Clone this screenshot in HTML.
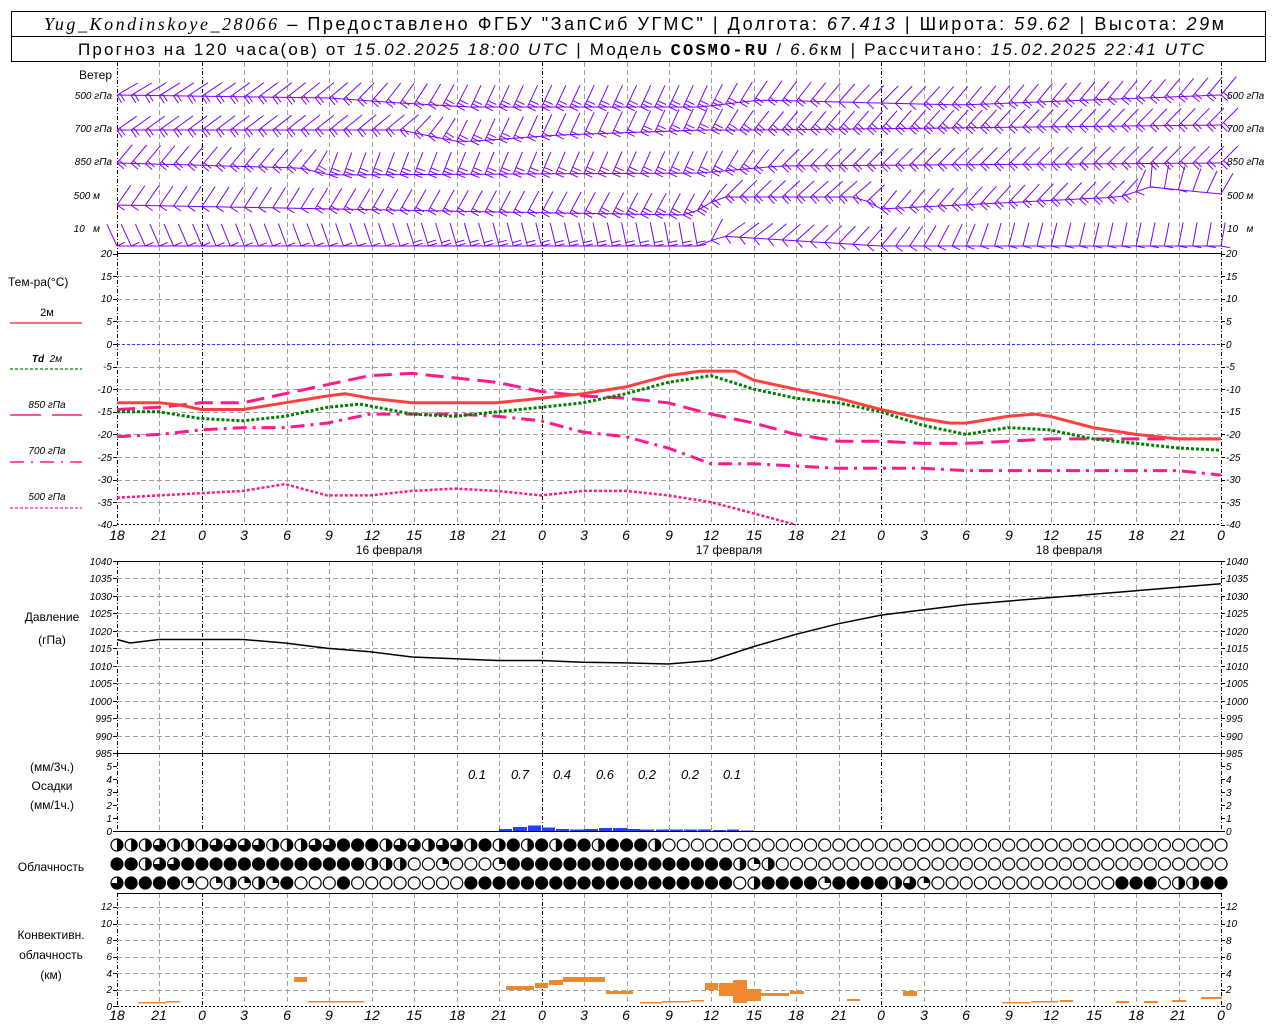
<!DOCTYPE html>
<html><head><meta charset="utf-8"><style>
html,body{margin:0;padding:0;background:#fff;width:1280px;height:1024px;overflow:hidden}
svg{display:block;font-family:"Liberation Sans",sans-serif}
.l{font-size:12px;fill:#000}
.t{font-size:10px;font-style:italic;fill:#000}
.h{font-size:14px;font-style:italic;fill:#000;text-anchor:middle}
.r{text-anchor:end}
.c{text-anchor:middle}
</style></head><body>
<svg id="s" width="1280" height="1024" viewBox="0 0 1280 1024" xmlns="http://www.w3.org/2000/svg">
<rect x="11.5" y="11.5" width="1254" height="50" fill="none" stroke="#000"/>
<line x1="11" y1="36.5" x2="1266" y2="36.5" stroke="#000"/>
<text x="44" y="30" font-size="18" textLength="1180" lengthAdjust="spacing"><tspan font-style="italic" font-family="Liberation Serif">Yug_Kondinskoye_28066</tspan> – Предоставлено ФГБУ "ЗапСиб УГМС" | Долгота: <tspan font-style="italic">67.413</tspan> | Широта: <tspan font-style="italic">59.62</tspan> | Высота: <tspan font-style="italic">29</tspan>м</text>
<text x="78" y="55" font-size="17" textLength="1126" lengthAdjust="spacing">Прогноз на 120 часа(ов) от <tspan font-style="italic">15.02.2025 18:00 UTC</tspan> | Модель <tspan font-weight="bold" font-family="Liberation Mono">COSMO-RU</tspan> / <tspan font-style="italic">6.6</tspan>км | Рассчитано: <tspan font-style="italic">15.02.2025 22:41 UTC</tspan></text>
<g id="grid"></g>
<g id="data"></g>
<text class="l r" x="112" y="79">Ветер</text>
<text class="t r" x="112" y="99" font-size="11">500 гПа</text>
<text class="t r" x="112" y="132" font-size="11">700 гПа</text>
<text class="t r" x="112" y="165" font-size="11">850 гПа</text>
<text class="t r" x="100" y="199" font-size="11">500 м</text>
<text class="t r" x="100" y="232" font-size="11">10&#160;&#160;&#160;м</text>
<text class="t" x="1227" y="99" font-size="11">500 гПа</text>
<text class="t" x="1227" y="132" font-size="11">700 гПа</text>
<text class="t" x="1227" y="165" font-size="11">850 гПа</text>
<text class="t" x="1227" y="199" font-size="11">500 м</text>
<text class="t" x="1227" y="232" font-size="11">10&#160;&#160;&#160;м</text>
<text class="l" x="8" y="286">Тем-ра(°C)</text>
<text class="c" x="47" y="316" font-size="11">2м</text>
<line x1="10" y1="323" x2="82" y2="323" stroke="#ff4040" stroke-width="1.5"/>
<text class="t c" x="47" y="362" font-size="11"><tspan font-weight="bold">Td</tspan>&#160;&#160;2м</text>
<line x1="10" y1="369" x2="82" y2="369" stroke="#008000" stroke-width="1.2" stroke-dasharray="3,2"/>
<text class="t c" x="47" y="408" font-size="11">850 гПа</text>
<line x1="10" y1="415" x2="41" y2="415" stroke="#ff1a8c" stroke-width="1.5"/><line x1="52" y1="415" x2="82" y2="415" stroke="#ff1a8c" stroke-width="1.5"/>
<text class="t c" x="47" y="454" font-size="11">700 гПа</text>
<line x1="10" y1="462" x2="82" y2="462" stroke="#ff1a8c" stroke-width="1.5" stroke-dasharray="14,7,2,7"/>
<text class="t c" x="47" y="500" font-size="11">500 гПа</text>
<line x1="10" y1="508" x2="82" y2="508" stroke="#ff1a8c" stroke-width="1.2" stroke-dasharray="3,2"/>
<text class="l c" x="52" y="621">Давление</text>
<text class="l c" x="52" y="644">(гПа)</text>
<text class="l c" x="52" y="771">(мм/3ч.)</text>
<text class="l c" x="52" y="790">Осадки</text>
<text class="l c" x="52" y="809">(мм/1ч.)</text>
<text class="l c" x="51" y="871">Облачность</text>
<text class="l c" x="51" y="939">Конвективн.</text>
<text class="l c" x="51" y="959">облачность</text>
<text class="l c" x="51" y="979">(км)</text>
<text class="t r" x="112" y="257">20</text><text class="t r" x="112" y="280">15</text><text class="t r" x="112" y="302">10</text><text class="t r" x="112" y="325">5</text><text class="t r" x="112" y="348">0</text><text class="t r" x="112" y="370">-5</text><text class="t r" x="112" y="393">-10</text><text class="t r" x="112" y="415">-15</text><text class="t r" x="112" y="438">-20</text><text class="t r" x="112" y="461">-25</text><text class="t r" x="112" y="483">-30</text><text class="t r" x="112" y="506">-35</text><text class="t r" x="112" y="528">-40</text>
<text class="t" x="1226" y="257">20</text><text class="t" x="1226" y="280">15</text><text class="t" x="1226" y="302">10</text><text class="t" x="1226" y="325">5</text><text class="t" x="1226" y="348">0</text><text class="t" x="1226" y="370">-5</text><text class="t" x="1226" y="393">-10</text><text class="t" x="1226" y="415">-15</text><text class="t" x="1226" y="438">-20</text><text class="t" x="1226" y="461">-25</text><text class="t" x="1226" y="483">-30</text><text class="t" x="1226" y="506">-35</text><text class="t" x="1226" y="528">-40</text>
<text class="t r" x="112" y="565">1040</text><text class="t r" x="112" y="582">1035</text><text class="t r" x="112" y="600">1030</text><text class="t r" x="112" y="617">1025</text><text class="t r" x="112" y="635">1020</text><text class="t r" x="112" y="652">1015</text><text class="t r" x="112" y="670">1010</text><text class="t r" x="112" y="687">1005</text><text class="t r" x="112" y="705">1000</text><text class="t r" x="112" y="722">995</text><text class="t r" x="112" y="740">990</text><text class="t r" x="112" y="757">985</text>
<text class="t" x="1226" y="565">1040</text><text class="t" x="1226" y="582">1035</text><text class="t" x="1226" y="600">1030</text><text class="t" x="1226" y="617">1025</text><text class="t" x="1226" y="635">1020</text><text class="t" x="1226" y="652">1015</text><text class="t" x="1226" y="670">1010</text><text class="t" x="1226" y="687">1005</text><text class="t" x="1226" y="705">1000</text><text class="t" x="1226" y="722">995</text><text class="t" x="1226" y="740">990</text>
<text class="t r" x="112" y="770">5</text><text class="t r" x="112" y="783">4</text><text class="t r" x="112" y="796">3</text><text class="t r" x="112" y="809">2</text><text class="t r" x="112" y="822">1</text><text class="t r" x="112" y="835">0</text>
<text class="t" x="1226" y="757">985</text><text class="t" x="1226" y="770">5</text><text class="t" x="1226" y="783">4</text><text class="t" x="1226" y="796">3</text><text class="t" x="1226" y="809">2</text><text class="t" x="1226" y="822">1</text><text class="t" x="1226" y="835">0</text>
<g font-size="13" font-style="italic" text-anchor="middle">
<text x="477" y="779">0.1</text><text x="520" y="779">0.7</text><text x="562" y="779">0.4</text><text x="605" y="779">0.6</text><text x="647" y="779">0.2</text><text x="690" y="779">0.2</text><text x="732" y="779">0.1</text>
</g>
<text class="t r" x="112" y="910">12</text><text class="t r" x="112" y="927">10</text><text class="t r" x="112" y="944">8</text><text class="t r" x="112" y="960">6</text><text class="t r" x="112" y="977">4</text><text class="t r" x="112" y="993">2</text><text class="t r" x="112" y="1010">0</text>
<text class="t" x="1226" y="910">12</text><text class="t" x="1226" y="927">10</text><text class="t" x="1226" y="944">8</text><text class="t" x="1226" y="960">6</text><text class="t" x="1226" y="977">4</text><text class="t" x="1226" y="993">2</text><text class="t" x="1226" y="1010">0</text>
<g class="h">
<text class="h" x="117" y="540">18</text><text class="h" x="159" y="540">21</text><text class="h" x="202" y="540">0</text><text class="h" x="244" y="540">3</text><text class="h" x="287" y="540">6</text><text class="h" x="329" y="540">9</text><text class="h" x="372" y="540">12</text><text class="h" x="414" y="540">15</text><text class="h" x="457" y="540">18</text><text class="h" x="499" y="540">21</text><text class="h" x="542" y="540">0</text><text class="h" x="584" y="540">3</text><text class="h" x="626" y="540">6</text><text class="h" x="669" y="540">9</text><text class="h" x="711" y="540">12</text><text class="h" x="754" y="540">15</text><text class="h" x="796" y="540">18</text><text class="h" x="839" y="540">21</text><text class="h" x="881" y="540">0</text><text class="h" x="924" y="540">3</text><text class="h" x="966" y="540">6</text><text class="h" x="1009" y="540">9</text><text class="h" x="1051" y="540">12</text><text class="h" x="1094" y="540">15</text><text class="h" x="1136" y="540">18</text><text class="h" x="1178" y="540">21</text><text class="h" x="1221" y="540">0</text>
</g>
<text class="l c" x="389" y="554" font-size="13">16 февраля</text>
<text class="l c" x="729" y="554" font-size="13">17 февраля</text>
<text class="l c" x="1069" y="554" font-size="13">18 февраля</text>
<g class="h">
<text class="h" x="117" y="1020">18</text><text class="h" x="159" y="1020">21</text><text class="h" x="202" y="1020">0</text><text class="h" x="244" y="1020">3</text><text class="h" x="287" y="1020">6</text><text class="h" x="329" y="1020">9</text><text class="h" x="372" y="1020">12</text><text class="h" x="414" y="1020">15</text><text class="h" x="457" y="1020">18</text><text class="h" x="499" y="1020">21</text><text class="h" x="542" y="1020">0</text><text class="h" x="584" y="1020">3</text><text class="h" x="626" y="1020">6</text><text class="h" x="669" y="1020">9</text><text class="h" x="711" y="1020">12</text><text class="h" x="754" y="1020">15</text><text class="h" x="796" y="1020">18</text><text class="h" x="839" y="1020">21</text><text class="h" x="881" y="1020">0</text><text class="h" x="924" y="1020">3</text><text class="h" x="966" y="1020">6</text><text class="h" x="1009" y="1020">9</text><text class="h" x="1051" y="1020">12</text><text class="h" x="1094" y="1020">15</text><text class="h" x="1136" y="1020">18</text><text class="h" x="1178" y="1020">21</text><text class="h" x="1221" y="1020">0</text>
</g>
</svg>
<script>
(function(){
var NS="http://www.w3.org/2000/svg";
var G=document.getElementById("grid"),D=document.getElementById("data");
function el(p,n,a){var e=document.createElementNS(NS,n);for(var k in a)e.setAttribute(k,a[k]);p.appendChild(e);return e;}
function X(k){return 117+42.46*k;}
var panels=[[62,253],[253,524],[561,753],[753,831],[893,1006]];
panels.forEach(function(p){
 for(var k=0;k<=26;k++){
  var x=Math.round(X(k))+0.5;
  if(k%8==2||k==0||k==26){el(G,"line",{x1:x,y1:p[0],x2:x,y2:p[1],stroke:"#000","stroke-width":1,"stroke-dasharray":"4,2,1,2"});}
  else el(G,"line",{x1:x,y1:p[0],x2:x,y2:p[1],stroke:"#a0a0a0","stroke-width":1,"stroke-dasharray":"5,3"});
 }
});
function hl(y,st){el(G,"line",{x1:117,y1:y,x2:1221,y2:y,stroke:st?"#000":"#a0a0a0","stroke-width":1,"stroke-dasharray":st||"5,3"});}
for(var t=15;t>=-35;t-=5){ if(t!=0) hl(Math.round(344-4.52*t)+0.5);}
el(G,"line",{x1:117,y1:344.5,x2:1221,y2:344.5,stroke:"#2040ff","stroke-width":1,"stroke-dasharray":"3,2"});
for(var p=1035;p>=990;p-=5) hl(Math.round(561+(1040-p)*3.49)+0.5);
for(var c=2;c<=12;c+=2) hl(Math.round(1006-8.25*c)+0.5);
[253.5,561.5,753.5,831.5,893.5].forEach(function(y){el(G,"line",{x1:117,y1:y,x2:1221,y2:y,stroke:"#000","stroke-width":1});});
el(G,"line",{x1:117,y1:524.5,x2:1221,y2:524.5,stroke:"#000","stroke-dasharray":"2,2"});
el(G,"line",{x1:117,y1:1006.5,x2:1221,y2:1006.5,stroke:"#000","stroke-dasharray":"2,2"});
[[561,753,17.45,0,11],[766,831,13,0,5],[907,1006,16.5,0,6]].forEach(function(a){
 for(var i=0;i<=a[4];i++){var y=Math.round(a[0]+i*a[2])+0.5;el(G,"line",{x1:113,y1:y,x2:117,y2:y,stroke:"#000"});el(G,"line",{x1:1221,y1:y,x2:1225,y2:y,stroke:"#000"});}
});
for(var t2=20;t2>=-40;t2-=5){var yy=Math.round(344-4.52*t2)+0.5;el(G,"line",{x1:113,y1:yy,x2:117,y2:yy,stroke:"#000"});el(G,"line",{x1:1221,y1:yy,x2:1225,y2:yy,stroke:"#000"});}
function curve(pts,fy,st){var s=pts.map(function(p){return p[0]+","+fy(p[1]).toFixed(1);}).join(" ");st.points=s;st.fill="none";el(D,"polyline",st);}
var T=function(t){return 344-4.52*t;};
curve([[117,-20.5],[159,-20],[201,-19],[243,-18.5],[285,-18.5],[327,-17.5],[370,-15.5],[412,-15.5],[455,-15.5],[497,-16],[541,-17],[583,-19.5],[626,-20.5],[668,-23],[711,-26.5],[754,-26.5],[796,-27],[838,-27.5],[881,-27.5],[923,-27.5],[966,-28],[1008,-28],[1050,-28],[1093,-28],[1136,-28],[1178,-28],[1221,-29]],T,{stroke:"#ff1a8c","stroke-width":3,"stroke-dasharray":"14,6,3,6"});
curve([[117,-34],[159,-33.5],[201,-33],[243,-32.5],[285,-31],[327,-33.5],[370,-33.5],[412,-32.5],[455,-32],[497,-32.5],[541,-33.5],[583,-32.5],[626,-32.5],[668,-33.5],[711,-35],[754,-37.5],[796,-40]],T,{stroke:"#ff1a8c","stroke-width":2.5,"stroke-dasharray":"3,2"});
curve([[117,-14.5],[159,-14],[201,-13],[243,-13],[285,-11],[327,-9],[370,-7],[412,-6.5],[455,-7.5],[497,-8.5],[541,-10.5],[583,-11.5],[626,-12],[668,-13],[711,-15.5],[754,-17.5],[796,-20],[838,-21.5],[881,-21.5],[923,-22],[966,-22],[1008,-21.5],[1050,-21],[1093,-21],[1136,-21],[1178,-21],[1221,-21]],T,{stroke:"#ff1a8c","stroke-width":3,"stroke-dasharray":"18,8"});
curve([[117,-15],[159,-15],[201,-16.5],[243,-17],[285,-16],[327,-14],[360,-13.3],[412,-15.5],[455,-16],[497,-15],[541,-14],[583,-13],[626,-11],[668,-8.5],[711,-7],[754,-10],[796,-12],[838,-13],[881,-15],[923,-18],[966,-20],[1008,-18.5],[1050,-19],[1093,-21],[1136,-22],[1178,-23],[1221,-23.5]],T,{stroke:"#008000","stroke-width":3,"stroke-dasharray":"3,2"});
curve([[117,-13],[159,-13],[180,-13.5],[201,-14.5],[243,-14.5],[285,-13],[327,-11.5],[345,-11],[370,-12],[412,-13],[455,-13],[497,-13],[541,-12],[583,-11],[626,-9.5],[668,-7],[700,-6],[735,-6],[754,-8],[796,-10],[838,-12],[881,-14.5],[923,-16.5],[950,-17.5],[966,-17.5],[1008,-16],[1035,-15.5],[1050,-16],[1093,-18.5],[1136,-20],[1178,-21],[1221,-21]],T,{stroke:"#ff4040","stroke-width":3});
curve([[117,1017.5],[130,1016.5],[159,1017.5],[201,1017.5],[243,1017.5],[285,1016.5],[327,1015],[370,1014],[412,1012.5],[455,1012],[497,1011.5],[541,1011.5],[583,1011],[626,1010.8],[668,1010.5],[690,1011],[711,1011.5],[754,1015.5],[796,1019],[838,1022],[881,1024.5],[923,1026],[966,1027.5],[1008,1028.5],[1050,1029.5],[1093,1030.5],[1136,1031.5],[1178,1032.5],[1221,1033.5]],function(p){return 561+(1040-p)*3.49;},{stroke:"#000","stroke-width":1.5});
[[485,498,831],[499,512,829],[513,527,827],[528,541,825.5],[542,555,827.5],[556,569,829],[570,584,829.5],[584,598,829],[599,612,828],[613,627,828],[627,640,829],[640,654,829.5],[656,669,829.5],[670,683,829.5],[684,697,829.5],[698,711,829.5],[713,726,830],[727,739,829.5],[741,754,830.5]].forEach(function(b){el(D,"rect",{x:b[0],y:b[2],width:b[1]-b[0],height:831-b[2],fill:"#2040ff"});});
[[138,166,1002,1003.5],[166,180,1001,1002.5],[294,307,977,982],[308,364,1001,1002.5],[506,534,986,990],[535,548,983,988],[549,563,980,985],[563,605,977,982],[606,620,991,994],[620,633,991,994],[640,662,1002,1003.5],[662,690,1001,1002.5],[691,704,1000,1001.5],[705,718,983,990],[719,733,983,996],[733,747,980,1003],[747,761,989,1001],[761,775,993,996],[775,789,993,996],[790,804,991,994],[847,860,999,1001],[903,917,991,996],[1002,1016,1002,1003.5],[1016,1030,1002,1003.5],[1031,1045,1001,1002.5],[1045,1058,1001,1002.5],[1060,1073,1000,1002],[1116,1129,1001,1003],[1144,1158,1001,1003],[1172,1186,1000,1002],[1201,1222,997,999]].forEach(function(b){el(D,"rect",{x:b[0],y:b[2],width:b[1]-b[0],height:b[3]-b[2],fill:"#f08830"});});
var rows=["HHHQHHHQQQQHHHQQBBBHQQHQQHBHBHBHBBHBBBH"+"W".repeat(40),
"BBHQQ"+"B".repeat(13)+"HHHWWPWWWP"+"B".repeat(16)+"HPH"+"W".repeat(32),
"QBBBBPWPHPHPBWWWBWWWWWWWW"+"B".repeat(19)+"WHBBBBPBBBBHQP"+"W".repeat(13)+"BBBWHHBB"];
var ys=[845,864,883];
rows.forEach(function(r,ri){for(var i=0;i<79&&i<r.length;i++){var cx=117+14.154*i,cy=ys[ri],ch=r[i],R=6;
 el(D,"circle",{cx:cx,cy:cy,r:R,fill:ch=="B"?"#000":"#fff",stroke:"#000","stroke-width":1.2});
 if(ch=="H")el(D,"path",{d:"M"+cx+","+(cy-R)+"A"+R+","+R+" 0 0 1 "+cx+","+(cy+R)+"Z",fill:"#000"});
 if(ch=="Q")el(D,"path",{d:"M"+cx+","+cy+"L"+cx+","+(cy-R)+"A"+R+","+R+" 0 1 1 "+(cx-R)+","+cy+"Z",fill:"#000"});
 if(ch=="P")el(D,"path",{d:"M"+cx+","+cy+"L"+cx+","+(cy-R)+"A"+R+","+R+" 0 0 1 "+(cx+R)+","+cy+"Z",fill:"#000"});
}});
function interp(spec,x){for(var i=0;i<spec.length-1;i++){if(x>=spec[i][0]&&x<=spec[i+1][0]){var f=(x-spec[i][0])/(spec[i+1][0]-spec[i][0]);return [spec[i][1]+f*(spec[i+1][1]-spec[i][1]),Math.round(spec[i][2]+f*(spec[i+1][2]-spec[i][2])),spec[i][3]+f*(spec[i+1][3]-spec[i][3])];}}return [spec[spec.length-1][1],spec[spec.length-1][2],spec[spec.length-1][3]];}
var W=[[95,[[117,60,2,0],[330,50,2,3],[400,35,2,8],[470,25,3,12],[700,25,3,12],[760,35,2,5],[880,45,1,8],[960,40,2,10],[1221,40,2,0]]],
[130,[[117,55,2,0],[400,50,2,0],[460,25,3,12],[560,25,2,5],[700,25,3,0],[760,40,3,0],[1221,45,2,-5]]],
[163,[[117,40,2,0],[300,40,2,5],[330,20,3,12],[700,25,3,10],[780,45,2,3],[1221,45,2,0]]],
[197,[[117,35,1,8],[500,28,2,15],[690,28,3,18],[720,45,2,0],[860,50,2,0],[880,40,2,12],[1120,45,2,0],[1150,5,1,-10],[1221,30,0,-3]]],
[246,[[117,-25,1,0],[700,-10,2,0],[720,55,1,-10],[880,40,1,0],[1000,15,1,0],[1221,10,1,0]]]];
var col="#8000ff";
W.forEach(function(w){var pts=[];for(var i=0;i<79;i++){var x=117+14.154*i,v=interp(w[1],x),a=v[0]*Math.PI/180,y=w[0]+v[2],L=24;
 pts.push(x.toFixed(1)+","+y.toFixed(1));
 var dx=Math.sin(a),dy=-Math.cos(a);
 var d="M"+x.toFixed(1)+","+y.toFixed(1)+"l"+(dx*L).toFixed(1)+","+(dy*L).toFixed(1);
 for(var f=0;f<v[1];f++){var bx=x+dx*f*3.5,by=y+dy*f*3.5;d+="M"+bx.toFixed(1)+","+by.toFixed(1)+"l"+(Math.cos(a)*9).toFixed(1)+","+(Math.sin(a)*9).toFixed(1);}
 el(D,"path",{d:d,stroke:col,"stroke-width":1,fill:"none"});}
 el(D,"polyline",{points:pts.join(" "),stroke:col,"stroke-width":1,fill:"none"});
});
})();
</script>
</body></html>
